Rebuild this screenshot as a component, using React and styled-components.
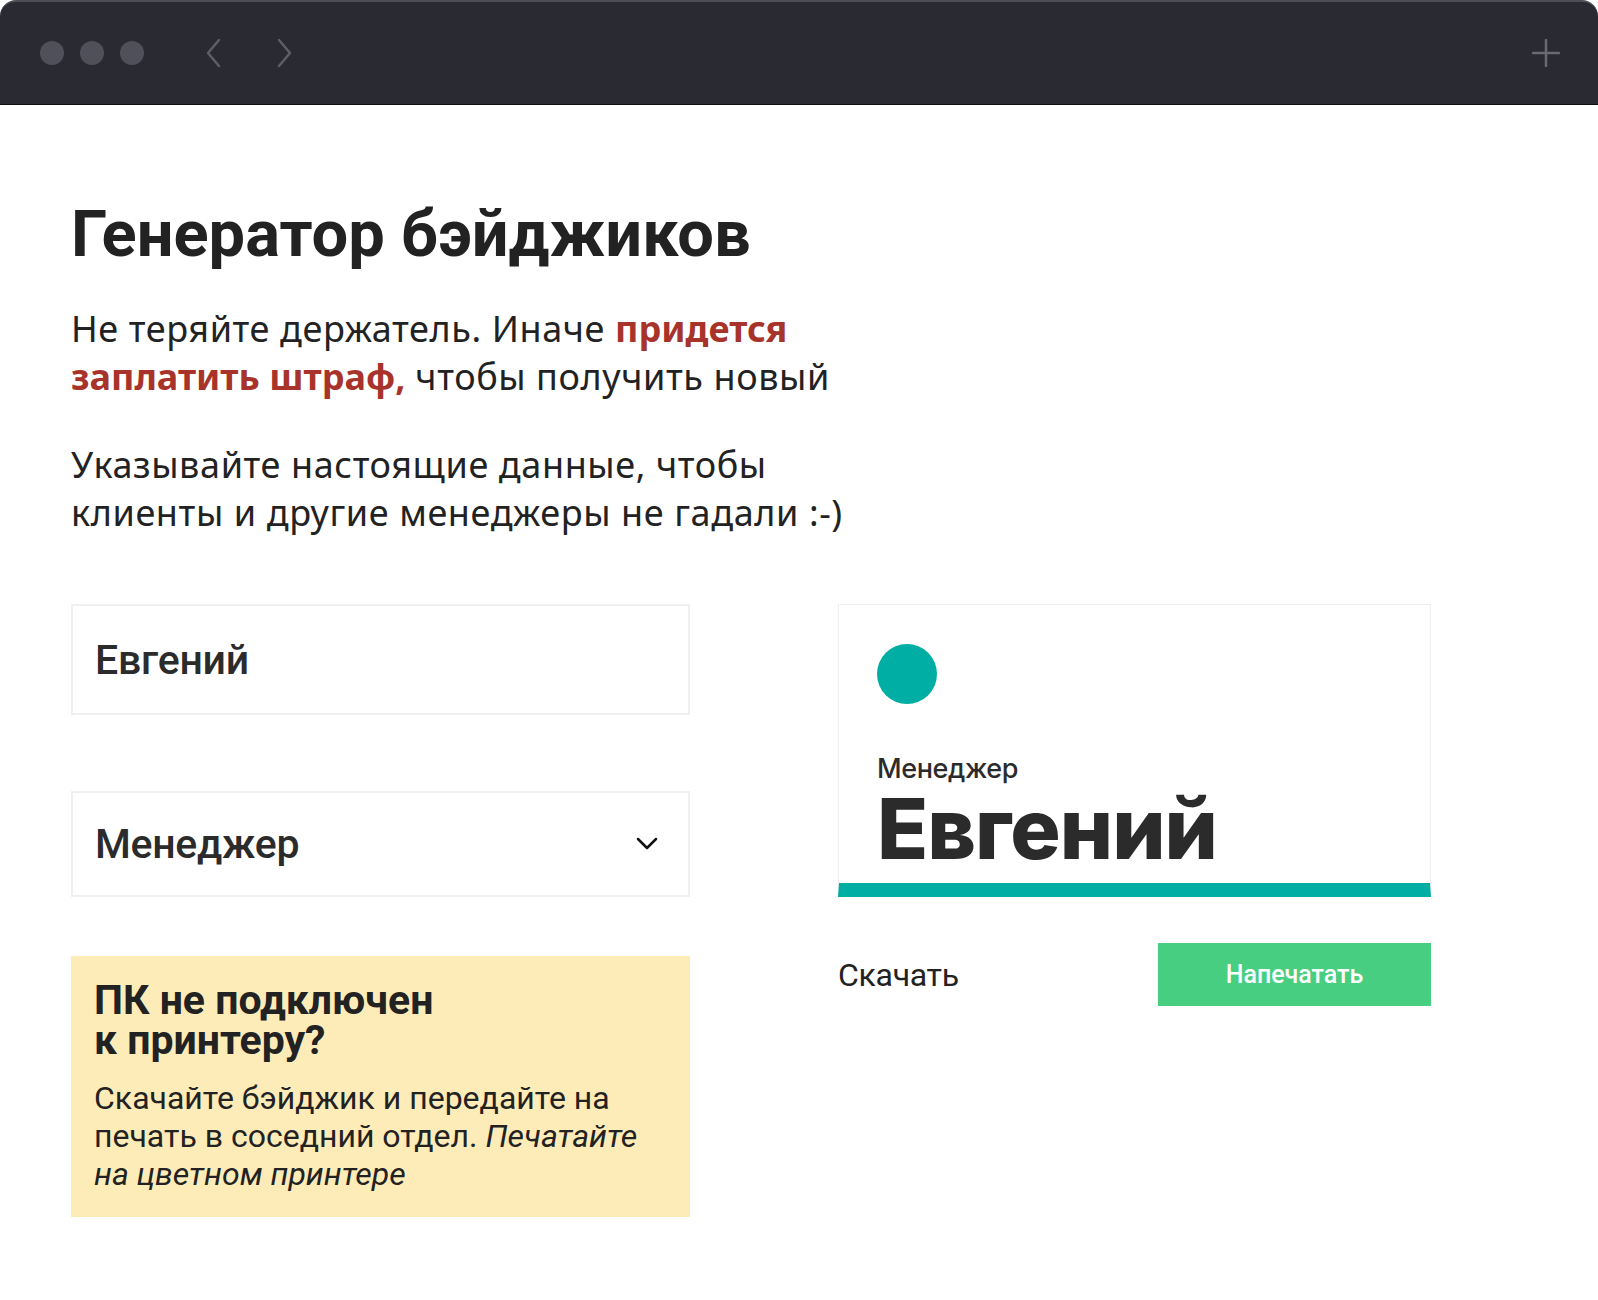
import React from 'react';
import styled, { createGlobalStyle } from 'styled-components';

const GlobalStyle = createGlobalStyle`
  html, body {
    margin: 0;
    padding: 0;
    background: #fff;
  }
  body {
    font-family: Roboto, "Noto Sans", sans-serif;
    color: #222;
  }
  * { box-sizing: border-box; }
`;

const TopBar = styled.div`
  height: 105px;
  background: #2a2a33;
  border-top: 2px solid #4e4e57;
  border-bottom: 1px solid #0e0e12;
  border-radius: 16px 16px 0 0;
  display: flex;
  align-items: center;
  padding: 0 38px 0 40px;
`;

const Dots = styled.div`
  display: flex;
  gap: 16px;
`;

const Dot = styled.span`
  width: 24px;
  height: 24px;
  border-radius: 50%;
  background: #50505a;
`;

const Nav = styled.div`
  display: flex;
  gap: 54px;
  margin-left: 60px;
`;

const Spacer = styled.div`
  flex: 1;
`;

const Page = styled.main`
  padding: 91px 71px 0 71px;
`;

const Title = styled.h1`
  margin: 0;
  font-size: 65px;
  line-height: 76px;
  font-weight: 700;
  color: #222;
`;

const Lead = styled.p`
  margin: ${p => p.$top}px 0 0 0;
  font-family: "Noto Sans", Roboto, sans-serif;
  font-size: 36px;
  line-height: 48px;
  letter-spacing: 0.6px;
  color: #222;
`;

const Accent = styled.b`
  color: #a8332a;
  font-weight: 700;
  letter-spacing: 0;
`;

const Columns = styled.div`
  display: grid;
  grid-template-columns: 619px 593px;
  column-gap: 148px;
  margin-top: 67px;
  align-items: start;
`;

const LeftCol = styled.div`
  display: flex;
  flex-direction: column;
`;

const TextInput = styled.input`
  height: 111px;
  width: 100%;
  border: 2px solid #f0f0f0;
  padding: 0 22px;
  font-family: Roboto, "Noto Sans", sans-serif;
  font-size: 41px;
  font-weight: 500;
  letter-spacing: -0.2px;
  color: #2b2b2b;
  outline: none;
  background: #fff;
`;

const SelectBox = styled.div`
  margin-top: 76px;
  height: 106px;
  border: 2px solid #f0f0f0;
  padding: 0 30px 0 22px;
  display: flex;
  align-items: center;
  justify-content: space-between;
  font-size: 41px;
  font-weight: 500;
  letter-spacing: -0.3px;
  color: #2b2b2b;
`;

const Notice = styled.div`
  margin-top: 59px;
  background: #feecb8;
  padding: 24px 25px 24px 23px;
`;

const NoticeTitle = styled.h3`
  margin: 0;
  max-width: 355px;
  font-size: 41px;
  line-height: 40px;
  font-weight: 700;
  color: #222;
`;

const NoticeText = styled.p`
  margin: 19px 0 0 0;
  font-size: 32px;
  line-height: 38px;
  color: #222;
`;

const RightCol = styled.div`
  display: flex;
  flex-direction: column;
`;

const Badge = styled.div`
  height: 293px;
  border: 1px solid #efefef;
  border-bottom: 14px solid #00aea3;
  padding: 39px 38px 0 38px;
  display: flex;
  flex-direction: column;
  font-family: Inter, "Noto Sans", sans-serif;
`;

const BadgeDot = styled.div`
  width: 60px;
  height: 60px;
  border-radius: 50%;
  background: #00aea3;
`;

const BadgeRole = styled.div`
  margin-top: 50px;
  font-size: 27px;
  line-height: 30px;
  font-weight: 500;
  color: #2b2b2b;
  letter-spacing: -0.4px;
`;

const BadgeName = styled.div`
  margin-top: 4px;
  font-size: 84px;
  line-height: 82px;
  font-weight: 800;
  color: #2b2b2b;
  letter-spacing: -1px;
`;

const Actions = styled.div`
  margin-top: 46px;
  display: flex;
  align-items: center;
  justify-content: space-between;
`;

const LinkButton = styled.button`
  background: none;
  border: none;
  padding: 0;
  font-family: Roboto, "Noto Sans", sans-serif;
  font-size: 32px;
  letter-spacing: -0.3px;
  color: #222;
  cursor: pointer;
`;

const PrintButton = styled.button`
  width: 273px;
  height: 63px;
  background: #48ce80;
  border: none;
  color: #fff;
  font-family: Roboto, "Noto Sans", sans-serif;
  font-size: 25px;
  font-weight: 500;
  cursor: pointer;
`;

const Chevron = ({ dir }) => (
  <svg width="18" height="30" viewBox="0 0 18 30" fill="none">
    <path
      d={dir === 'left' ? 'M15 2 L4 15 L15 28' : 'M3 2 L14 15 L3 28'}
      stroke="#5e5e67"
      strokeWidth="2.5"
      strokeLinecap="round"
      strokeLinejoin="round"
    />
  </svg>
);

const Plus = () => (
  <svg width="28" height="28" viewBox="0 0 28 28" fill="none">
    <path d="M14 1 V27 M1 14 H27" stroke="#6a6a72" strokeWidth="2.5" strokeLinecap="round" />
  </svg>
);

const SelectArrow = () => (
  <svg width="22" height="14" viewBox="0 0 22 14" fill="none">
    <path d="M2 2 L11 11 L20 2" stroke="#111" strokeWidth="2.5" strokeLinecap="round" strokeLinejoin="round" />
  </svg>
);

const App = () => (
  <>
    <GlobalStyle />
    <TopBar>
      <Dots>
        <Dot />
        <Dot />
        <Dot />
      </Dots>
      <Nav>
        <Chevron dir="left" />
        <Chevron dir="right" />
      </Nav>
      <Spacer />
      <Plus />
    </TopBar>
    <Page>
      <Title>Генератор бэйджиков</Title>
      <Lead $top={33}>
        Не теряйте держатель. Иначе <Accent>придется</Accent>
        <br />
        <Accent>заплатить штраф,</Accent> чтобы получить новый
      </Lead>
      <Lead $top={40}>
        Указывайте настоящие данные, чтобы
        <br />
        клиенты и другие менеджеры не гадали :-)
      </Lead>
      <Columns>
        <LeftCol>
          <TextInput value="Евгений" readOnly />
          <SelectBox>
            <span>Менеджер</span>
            <SelectArrow />
          </SelectBox>
          <Notice>
            <NoticeTitle>ПК не подключен к принтеру?</NoticeTitle>
            <NoticeText>
              Скачайте бэйджик и передайте на
              <br />
              печать в соседний отдел. <i>Печатайте</i>
              <br />
              <i>на цветном принтере</i>
            </NoticeText>
          </Notice>
        </LeftCol>
        <RightCol>
          <Badge>
            <BadgeDot />
            <BadgeRole>Менеджер</BadgeRole>
            <BadgeName>Евгений</BadgeName>
          </Badge>
          <Actions>
            <LinkButton>Скачать</LinkButton>
            <PrintButton>Напечатать</PrintButton>
          </Actions>
        </RightCol>
      </Columns>
    </Page>
  </>
);

export default App;
